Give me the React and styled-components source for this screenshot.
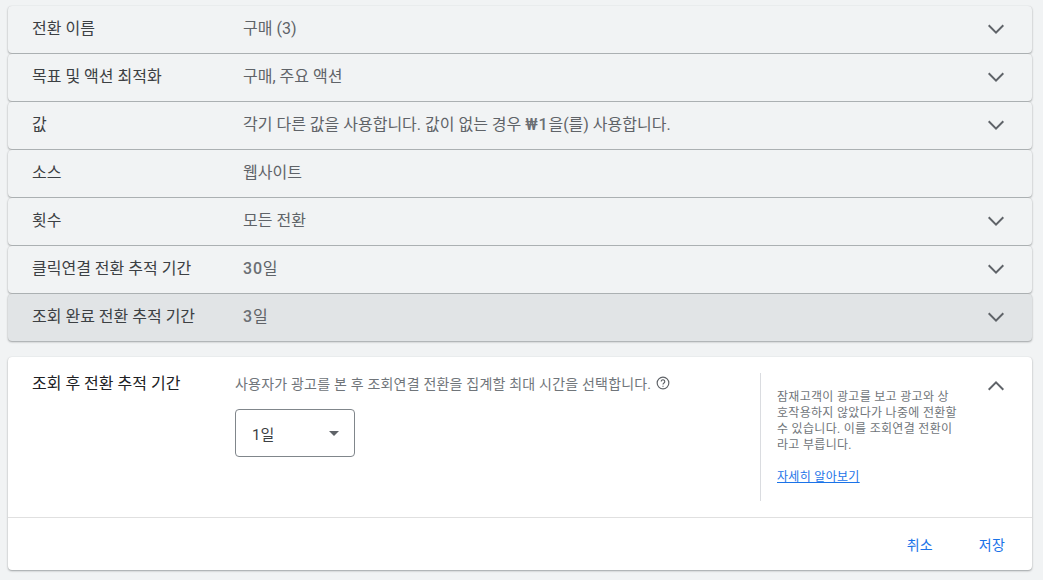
import React from 'react'
import styled, { createGlobalStyle } from 'styled-components'

const GlobalStyle = createGlobalStyle`
  html, body {
    margin: 0;
    background: #f1f3f4;
    font-family: Roboto, "Noto Sans CJK KR", sans-serif;
    overflow: hidden;
  }
`

const Page = styled.div`
  width: 1043px;
  height: 580px;
  box-sizing: border-box;
  padding: 6px 11px 0 8px;
`

const Row = styled.div`
  height: 47px;
  margin-bottom: 1px;
  box-sizing: border-box;
  display: flex;
  align-items: center;
  padding: 0 24px;
  background: ${p => (p.$active ? '#e1e4e6' : '#f1f3f4')};
  border-radius: 4px;
  box-shadow: 0 1px 2px rgba(60, 64, 67, .45), 0 0 1px rgba(60, 64, 67, .15);
`

const RowLabel = styled.div`
  width: 211px;
  flex: none;
  font-size: 16px;
  line-height: 20px;
  margin-top: -1px;
  color: #3c4043;
`

const RowValue = styled.div`
  flex: 1;
  font-size: 16px;
  line-height: 20px;
  margin-top: -1px;
  color: #5f6368;
`

const Num = styled.span`
  font-weight: 500;
  letter-spacing: .8px;
  color: #6b6f74;
`

const Chevron = styled.svg`
  width: 24px;
  height: 24px;
  flex: none;
  fill: #5f6368;
`

const Panel = styled.section`
  margin-top: 16px;
  height: 213px;
  display: flex;
  flex-direction: column;
  background: #fff;
  border-radius: 4px;
  box-shadow: 0 1px 2px rgba(60, 64, 67, .45), 0 0 1px rgba(60, 64, 67, .15);
`

const PanelBody = styled.div`
  height: 161px;
  flex: none;
  box-sizing: border-box;
  display: flex;
  padding: 16px 24px;
  border-bottom: 1px solid #e0e0e0;
`

const PanelTitle = styled.h2`
  width: 203px;
  flex: none;
  margin: 0;
  font-size: 16px;
  font-weight: 400;
  line-height: 22px;
  color: #202124;
`

const PanelMain = styled.div`
  width: 525px;
  flex: none;
`

const Hint = styled.div`
  display: flex;
  align-items: center;
  gap: 5px;
  height: 20px;
  font-size: 14px;
  letter-spacing: .2px;
  color: #70757a;
`

const Select = styled.div`
  margin-top: 16px;
  width: 120px;
  height: 48px;
  box-sizing: border-box;
  display: flex;
  align-items: center;
  justify-content: space-between;
  padding: 0 15px 0 16px;
  border: 1px solid #80868b;
  border-radius: 4px;
  font-size: 15px;
  color: #3c4043;
`

const Caret = styled.span`
  width: 0;
  height: 0;
  border-left: 5px solid transparent;
  border-right: 5px solid transparent;
  border-top: 5px solid #5f6368;
`

const Aside = styled.aside`
  width: 204px;
  height: 128px;
  flex: none;
  margin-right: 20px;
  box-sizing: border-box;
  padding: 16px 0 0 16px;
  border-left: 1px solid #dadce0;
  font-size: 12px;
  letter-spacing: .3px;
  line-height: 16px;
  color: #70757a;
`

const AsideText = styled.p`
  margin: 0 0 16px;
  width: 182px;
  word-break: break-all;
`

const LearnMore = styled.a`
  color: #1a73e8;
  text-decoration: underline;
`

const PanelFooter = styled.div`
  flex: 1;
  display: flex;
  justify-content: flex-end;
  align-items: center;
  gap: 46px;
  padding: 0 27px 0 0;
`

const TextButton = styled.button`
  padding: 0;
  border: 0;
  background: none;
  font: inherit;
  font-size: 14px;
  letter-spacing: .2px;
  color: #1a73e8;
`

const rows = [
  { label: '전환 이름', value: '구매 (3)', expandable: true },
  { label: '목표 및 액션 최적화', value: '구매, 주요 액션', expandable: true },
  { label: '값', value: <>각기 다른 값을 사용합니다. 값이 없는 경우 <Num>₩1</Num>을(를) 사용합니다.</>, expandable: true },
  { label: '소스', value: '웹사이트', expandable: false },
  { label: '횟수', value: '모든 전환', expandable: true },
  { label: '클릭연결 전환 추적 기간', value: <><Num>30</Num>일</>, expandable: true },
  { label: '조회 완료 전환 추적 기간', value: <><Num>3</Num>일</>, expandable: true, active: true },
]

const ChevronIcon = ({ up }) => (
  <Chevron viewBox="0 0 24 24">
    <path d={up ? 'M12 8l-8 8 1.4 1.4 6.6-6.6 6.6 6.6L20 16z' : 'M12 16l-8-8 1.4-1.4 6.6 6.6 6.6-6.6L20 8z'} />
  </Chevron>
)

const HelpIcon = () => (
  <svg width="14" height="14" viewBox="0 0 24 24" fill="none" stroke="#5f6368" strokeWidth="2">
    <circle cx="12" cy="12" r="10" />
    <path d="M9 9.5a3 3 0 1 1 4.6 2.5c-1 .7-1.6 1.3-1.6 2.5" />
    <path d="M12 16.5v2" />
  </svg>
)

const App = () => (
  <Page>
    <GlobalStyle />
    {rows.map(row => (
      <Row key={row.label} $active={row.active}>
        <RowLabel>{row.label}</RowLabel>
        <RowValue>{row.value}</RowValue>
        {row.expandable && <ChevronIcon />}
      </Row>
    ))}
    <Panel>
      <PanelBody>
        <PanelTitle>조회 후 전환 추적 기간</PanelTitle>
        <PanelMain>
          <Hint>사용자가 광고를 본 후 조회연결 전환을 집계할 최대 시간을 선택합니다. <HelpIcon /></Hint>
          <Select>1일<Caret /></Select>
        </PanelMain>
        <Aside>
          <AsideText>잠재고객이 광고를 보고 광고와 상호작용하지 않았다가 나중에 전환할 수 있습니다. 이를 조회연결 전환이라고 부릅니다.</AsideText>
          <LearnMore href="#">자세히 알아보기</LearnMore>
        </Aside>
        <ChevronIcon up />
      </PanelBody>
      <PanelFooter>
        <TextButton>취소</TextButton>
        <TextButton>저장</TextButton>
      </PanelFooter>
    </Panel>
  </Page>
)

export default App
